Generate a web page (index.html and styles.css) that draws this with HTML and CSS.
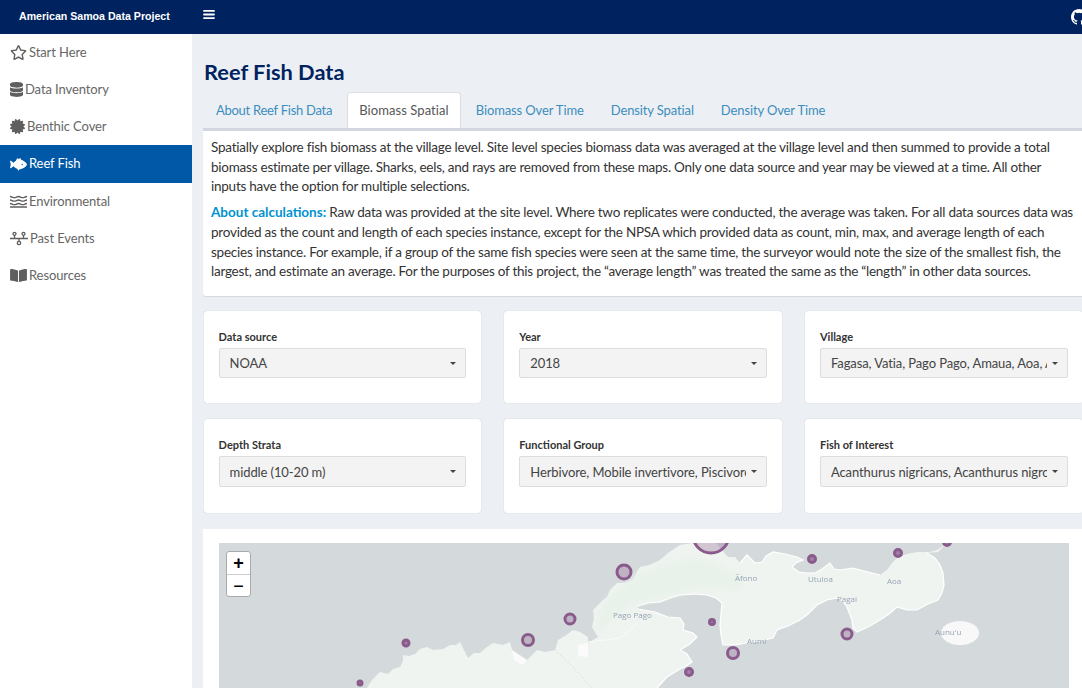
FILE: index.html
```html
<!DOCTYPE html>
<html lang="en">
<head>
    <meta charset="UTF-8">
    <meta name="viewport" content="width=device-width, initial-scale=1.0">
    <title>American Samoa Data Project</title>
    <link rel="stylesheet" href="styles.css">
</head>
<body>
    <div class="page">
        <header class="topbar">
            <div class="brand">American Samoa Data Project</div>
            <button class="toggle" aria-label="Toggle sidebar">
                <svg viewBox="0 0 12 9" width="12" height="9"><path d="M1 0h10a.8.8 0 0 1 0 1.8H1A.8.8 0 0 1 1 0zm0 3.6h10a.8.8 0 0 1 0 1.8H1a.8.8 0 0 1 0-1.8zm0 3.6h10a.8.8 0 0 1 0 1.8H1a.8.8 0 0 1 0-1.8z" fill="#fff"/></svg>
            </button>
            <svg class="github" viewBox="0 0 16 16" width="16" height="16"><path fill="#fff" d="M8 0C3.58 0 0 3.58 0 8c0 3.54 2.29 6.53 5.47 7.59.4.07.55-.17.55-.38 0-.19-.01-.82-.01-1.49-2.01.37-2.53-.49-2.69-.94-.09-.23-.48-.94-.82-1.13-.28-.15-.68-.52-.01-.53.63-.01 1.08.58 1.23.82.72 1.21 1.87.87 2.33.66.07-.52.28-.87.51-1.07-1.78-.2-3.64-.89-3.64-3.95 0-.87.31-1.59.82-2.15-.08-.2-.36-1.02.08-2.12 0 0 .67-.21 2.2.82a7.4 7.4 0 0 1 4 0c1.53-1.04 2.2-.82 2.2-.82.44 1.1.16 1.92.08 2.12.51.56.82 1.27.82 2.15 0 3.07-1.87 3.75-3.65 3.95.29.25.54.73.54 1.48 0 1.07-.01 1.93-.01 2.2 0 .21.15.46.55.38A8 8 0 0 0 16 8c0-4.42-3.58-8-8-8z"/></svg>
        </header>

        <div class="wrapper">
            <aside class="sidebar">
                <a class="nav-item" href="#">
                    <svg class="nav-icon" viewBox="0 0 576 512" width="17" height="15"><path d="M528.1 171.5L382 150.2 316.7 17.8c-11.7-23.6-45.6-23.9-57.4 0L194 150.2 47.9 171.5c-26.2 3.8-36.7 36.1-17.7 54.6l105.7 103-25 145.5c-4.5 26.3 23.2 46 46.4 33.7L288 439.6l130.7 68.7c23.2 12.2 50.9-7.4 46.4-33.7l-25-145.5 105.7-103c19-18.5 8.5-50.8-17.7-54.6zM388.6 312.3l23.7 138.4L288 385.4l-124.3 65.3 23.7-138.4-100.6-98 139-20.2 62.2-126 62.2 126 139 20.2-100.6 98z"/></svg>
                    <span class="nav-text">Start Here</span>
                </a>
                <a class="nav-item" href="#">
                    <svg class="nav-icon" viewBox="0 0 448 512" width="13" height="15"><path d="M448 73.143v45.714C448 159.143 347.667 192 224 192S0 159.143 0 118.857V73.143C0 32.857 100.333 0 224 0s224 32.857 224 73.143zM448 176v102.857C448 319.143 347.667 352 224 352S0 319.143 0 278.857V176c48.125 33.143 136.208 48.572 224 48.572S399.874 209.143 448 176zm0 160v102.857C448 479.143 347.667 512 224 512S0 479.143 0 438.857V336c48.125 33.143 136.208 48.572 224 48.572S399.874 369.143 448 336z"/></svg>
                    <span class="nav-text">Data Inventory</span>
                </a>
                <a class="nav-item" href="#">
                    <svg class="nav-icon" viewBox="0 0 512 512" width="15" height="15"><path d="M458.622 255.92l45.985-45.005c13.708-12.977 7.316-36.039-10.664-40.339l-62.65-15.99 17.661-62.015c4.991-17.838-11.829-34.663-29.661-29.671l-61.994 17.667-15.984-62.671C337.085.197 313.765-6.276 300.99 7.228L256 53.57 211.011 7.229c-12.63-13.351-36.047-7.234-40.325 10.668l-15.984 62.671-61.995-17.667C74.87 57.907 58.056 74.738 63.046 92.572l17.661 62.015-62.65 15.99C.069 174.878-6.31 197.944 7.392 210.915l45.985 45.005-45.985 45.004c-13.708 12.977-7.316 36.039 10.664 40.339l62.65 15.99-17.661 62.015c-4.991 17.838 11.829 34.663 29.661 29.671l61.994-17.667 15.984 62.671c4.439 18.575 27.696 24.018 40.325 10.668L256 458.61l44.989 46.001c12.5 13.488 35.987 7.486 40.325-10.668l15.984-62.671 61.994 17.667c17.836 4.994 34.651-11.837 29.661-29.671l-17.661-62.015 62.65-15.99c17.987-4.302 24.366-27.367 10.664-40.339l-45.984-45.004z"/></svg>
                    <span class="nav-text">Benthic Cover</span>
                </a>
                <a class="nav-item active" href="#">
                    <svg class="nav-icon" viewBox="0 0 576 512" width="17" height="15"><path d="M327.1 96c-89.97 0-168.54 54.77-212.27 101.63L27.5 131.58c-12.13-9.18-30.24.6-27.14 14.66L24.54 256 .35 365.77c-3.1 14.06 15.01 23.83 27.14 14.66l87.33-66.05C158.55 361.23 237.13 416 327.1 416 464.56 416 576 288 576 256S464.56 96 327.1 96zm87.43 184c-13.25 0-24-10.75-24-24 0-13.26 10.75-24 24-24 13.26 0 24 10.74 24 24 0 13.25-10.75 24-24 24z"/><path d="M190 150L240 40 300 70 350 30 390 110zM240 390L280 470 340 400z"/></svg>
                    <span class="nav-text">Reef Fish</span>
                </a>
                <a class="nav-item" href="#">
                    <svg class="nav-icon icon-lines" viewBox="0 0 17 15" width="17" height="15"><path d="M0 2.500c2.100 0 2.100 1.200 4.250 1.200S6.400 2.500 8.500 2.500s2.100 1.200 4.250 1.200S14.900 2.500 17 2.500M0 6c2.100 0 2.100 1.200 4.250 1.200S6.400 6 8.500 6s2.100 1.200 4.250 1.200S14.900 6 17 6M0 9.500c2.100 0 2.100 1.200 4.250 1.200S6.400 9.500 8.500 9.500s2.100 1.200 4.250 1.200S14.900 9.500 17 9.500M0 13h17"/></svg>
                    <span class="nav-text">Environmental</span>
                </a>
                <a class="nav-item" href="#">
                    <svg class="nav-icon icon-nodes" viewBox="0 0 18 15" width="18" height="15"><path d="M0 7.500h18M4.500 4v3.500M13.500 4v3.500M9 7.500V10"/><circle cx="4.500" cy="2.800" r="1.500"/><circle cx="13.500" cy="2.800" r="1.500"/><circle cx="9" cy="12" r="1.700"/></svg>
                    <span class="nav-text">Past Events</span>
                </a>
                <a class="nav-item" href="#">
                    <svg class="nav-icon" viewBox="0 0 576 512" width="17" height="15"><path d="M542.22 32.05c-54.8 3.11-163.72 14.43-230.96 55.59-4.64 2.84-7.27 7.89-7.27 13.17v363.87c0 11.55 12.63 18.85 23.28 13.49 69.18-34.82 169.23-44.32 218.7-46.92 16.89-.89 30.02-14.43 30.02-30.66V62.75c.01-17.71-15.35-31.74-33.77-30.7zM264.73 87.64C197.5 46.48 88.58 35.17 33.78 32.05 15.36 31.01 0 45.04 0 62.75V400.6c0 16.24 13.13 29.78 30.02 30.66 49.49 2.6 149.59 12.11 218.77 46.95 10.62 5.35 23.21-1.94 23.21-13.46V100.63c0-5.29-2.62-10.1-7.27-12.99z"/></svg>
                    <span class="nav-text">Resources</span>
                </a>
            </aside>

            <main class="content">
                <h1 class="page-title">Reef Fish Data</h1>

                <ul class="tabs">
                    <li class="tab">About Reef Fish Data</li>
                    <li class="tab active">Biomass Spatial</li>
                    <li class="tab">Biomass Over Time</li>
                    <li class="tab">Density Spatial</li>
                    <li class="tab">Density Over Time</li>
                </ul>

                <section class="tab-panel">
                    <p>Spatially explore fish biomass at the village level. Site level species biomass data was averaged at the village level and then summed to provide a total<br>biomass estimate per village. Sharks, eels, and rays are removed from these maps. Only one data source and year may be viewed at a time. All other<br>inputs have the option for multiple selections.</p>
                    <p><strong class="callout">About calculations:</strong> Raw data was provided at the site level. Where two replicates were conducted, the average was taken. For all data sources data was<br>provided as the count and length of each species instance, except for the NPSA which provided data as count, min, max, and average length of each<br>species instance. For example, if a group of the same fish species were seen at the same time, the surveyor would note the size of the smallest fish, the<br>largest, and estimate an average. For the purposes of this project, the “average length” was treated the same as the “length” in other data sources.</p>
                </section>

                <div class="filters">
                    <div class="card">
                        <label class="field-label">Data source</label>
                        <div class="picker"><span class="picker-text">NOAA</span><i class="caret"></i></div>
                    </div>
                    <div class="card">
                        <label class="field-label">Year</label>
                        <div class="picker"><span class="picker-text">2018</span><i class="caret"></i></div>
                    </div>
                    <div class="card">
                        <label class="field-label">Village</label>
                        <div class="picker"><span class="picker-text">Fagasa, Vatia, Pago Pago, Amaua, Aoa, Afono</span><i class="caret"></i></div>
                    </div>
                    <div class="card card-low">
                        <label class="field-label">Depth Strata</label>
                        <div class="picker"><span class="picker-text">middle (10-20 m)</span><i class="caret"></i></div>
                    </div>
                    <div class="card card-low">
                        <label class="field-label">Functional Group</label>
                        <div class="picker"><span class="picker-text">Herbivore, Mobile invertivore, Piscivore, Sessile</span><i class="caret"></i></div>
                    </div>
                    <div class="card card-low">
                        <label class="field-label">Fish of Interest</label>
                        <div class="picker"><span class="picker-text">Acanthurus nigricans, Acanthurus nigrofuscus</span><i class="caret"></i></div>
                    </div>
                </div>

                <section class="map-card">
                    <div class="map">
                        <svg class="map-art" viewBox="219 543 850 145" width="850" height="145">
                            <g class="base">
                                <path class="land" d="M367 688L372 680 380 672 388 674 393 669 400 667 403 661 403 655 409 656 415 654 420 649 427 647 433 650 443 649 450 645 456 645 460 642 464 650 468 658 474 653 480 653 487 647 493 643 503 645 510 642 512 650 518 654 527 660 537 650 545 652 555 650 558 640 565 636 573 630 580 632 588 637 588 643 598 637 592 627 594 618 593 610 603 600 607 597 610 590 617 583 625 583 633 580 637 572 640 567 650 565 660 560 668 553 680 545 693 543 716 543 728 557 735 557 740 563 747 555 755 563 762 562 766 556 773 552 785 554 797 557 803 560 796 563 792 567 799 572 807 573 815 573 822 569 830 563 834 569 840 570 853 568 868 572 880 575 887 570 892 563 897 558 907 554 917 552 930 552 937 550 945 545 938 552 927 553 935 558 940 565 943 573 944 585 942 593 938 600 928 604 917 610 907 610 897 607 889 614 880 620 868 627 857 632 853 628 852 620 847 607 843 601 837 598 827 600 817 605 808 614 800 620 788 626 777 630 773 638 760 641 747 643 735 645 723 645 721 635 720 625 722 603 716 598 707 595 695 594 680 595 670 598 660 602 648 603 638 606 638 609 655 612 668 617 680 618 684 624 683 630 693 633 697 637 690 644 680 650 687 654 692 662 686 666 680 669 667 677 657 688z"/>
                                <path class="green" d="M596 632L598 612 615 592 640 572 672 562 700 558 742 575 740 590 700 588 660 598 630 604 608 625z"/>
                                <path class="pale" d="M512 650L518 654 527 660 522 665 514 660zM578 645L588 643 588 657 578 656z"/>
                                <path class="coast" d="M638 606L648 603 660 602 670 598 680 595 695 594 707 595 716 598 722 603 720 625 721 635 723 645 735 645 747 643 760 641 773 638 777 630 788 626 800 620 808 614 817 605 827 600 837 598 843 601 847 607 852 620 853 628 857 632 868 627 880 620 889 614 897 607 907 610 917 610 928 604 938 600 942 593 944 585 943 573 940 565 935 558 927 553M740 563L747 555 755 563 762 562 766 556 773 552 785 554 797 557 803 560 796 563 792 567 799 572 807 573 815 573 822 569 830 563 834 569 840 570 853 568 868 572 880 575M638 609L655 612 668 617 680 618 684 624 683 630 693 633 697 637 690 644 680 650 687 654 692 662 686 666 680 669 667 677 657 688"/>
                                <path class="road" d="M588 642L606 640 620 638 630 630 637 623"/>
                                <path class="boundary" d="M555 650L574 668 592 688"/>
                                <ellipse class="island" cx="960" cy="633" rx="19" ry="12"/>
                                <text class="place" x="613" y="618">Pago Pago</text>
                                <text class="place" x="735" y="581">Āfono</text>
                                <text class="place" x="808" y="582">Utuloa</text>
                                <text class="place" x="887" y="584">Aoa</text>
                                <text class="place" x="837" y="602">Pagai</text>
                                <text class="place" x="747" y="644">Aumi</text>
                                <text class="place" x="935" y="635">Aunu'u</text>
                            </g>
                            <circle class="site" cx="711" cy="535" r="18"/>
                            <circle class="site" cx="624" cy="572" r="7"/>
                            <circle class="site" cx="570" cy="619" r="5"/>
                            <circle class="site" cx="528" cy="640" r="5.5"/>
                            <circle class="site dot" cx="406" cy="643" r="3"/>
                            <circle class="site dot" cx="360" cy="683" r="2"/>
                            <circle class="site dot" cx="812" cy="559" r="3.5"/>
                            <circle class="site dot" cx="898" cy="553" r="3.5"/>
                            <circle class="site dot" cx="947" cy="542" r="3.5"/>
                            <circle class="site dot" cx="712" cy="622" r="2.5"/>
                            <circle class="site" cx="733" cy="653" r="5.5"/>
                            <circle class="site" cx="847" cy="634" r="5"/>
                            <circle class="site dot" cx="689" cy="672" r="3.5"/>
                        </svg>
                        <div class="zoom-control">
                            <button class="zoom-btn">+</button>
                            <button class="zoom-btn">−</button>
                        </div>
                    </div>
                </section>
            </main>
        </div>
    </div>
</body>
</html>
```

FILE: styles.css
```css
html, body {
    margin: 0;
    height: 100%;
    overflow: hidden;
}
body {
    font-family: "Lato", "Noto Sans", sans-serif;
    font-size: 14px;
    color: #333;
    background-color: #ecf0f5;
}
.page {
    width: 1099px;
}
.topbar {
    display: flex;
    align-items: center;
    height: 34px;
    background: #00235f;
}
.brand {
    width: 192px;
    padding: 0 0 2px 19px;
    box-sizing: border-box;
    font-family: "Liberation Sans", Arial, sans-serif;
    font-size: 10.6px;
    font-weight: bold;
    color: #fff;
}
.toggle {
    display: flex;
    padding: 0;
    margin: -6px 0 0 11px;
    border: none;
    background: none;
}
.github {
    margin-left: auto;
    margin-right: 12px;
}
.wrapper {
    display: flex;
}
.sidebar {
    flex: none;
    width: 192px;
    height: 654px;
    background: #fff;
}
.nav-item {
    display: flex;
    align-items: center;
    gap: 2px;
    height: 37px;
    padding-left: 10px;
    color: #666;
    font-size: 13px;
    letter-spacing: -0.1px;
    text-decoration: none;
}
.nav-item.active {
    height: 38px;
    background: #0058a6;
    color: #fff;
}
.nav-text {
    padding-bottom: 2px;
}
.nav-icon {
    flex: none;
    fill: #5f5f5f;
}
.active .nav-icon {
    fill: #fff;
}
.nav-icon.icon-lines {
    fill: none;
    stroke: #5f5f5f;
    stroke-width: 1.3;
}
.nav-icon.icon-nodes {
    fill: none;
    stroke: #5f5f5f;
    stroke-width: 1.3;
}
.content {
    flex: none;
    width: 896px;
    padding-left: 11px;
    box-sizing: border-box;
}
.page-title {
    margin: 24px 0 0 1px;
    height: 34px;
    font-size: 21.8px;
    line-height: 27px;
    font-weight: bold;
    color: #00235f;
}
.tabs {
    display: flex;
    gap: 3px;
    height: 36px;
    margin: 0;
    padding: 0 0 0 1px;
    list-style: none;
}
.tab {
    padding: 9px 12px 0;
    color: #3c8dbc;
    font-size: 13px;
    letter-spacing: -0.12px;
    line-height: 18px;
}
.tab:first-child {
    letter-spacing: -0.27px;
}
.tab.active {
    background: #fff;
    color: #555;
    border: 1px solid #ddd;
    border-bottom: none;
    border-radius: 3px 3px 0 0;
    padding: 8px 11px 0;
    letter-spacing: 0.08px;
}
.tab-panel {
    height: 158px;
    padding: 7px 0 0 8px;
    background: #fff;
    border-top: 3px solid #d2d6de;
    border-radius: 0 0 3px 3px;
    box-shadow: 0 1px 1px rgba(0, 0, 0, 0.1);
    font-size: 13.5px;
    letter-spacing: -0.24px;
    line-height: 19.7px;
    white-space: nowrap;
    overflow: hidden;
}
.tab-panel p {
    margin: 0 0 6px;
}
.callout {
    color: #0093d0;
    letter-spacing: 0;
}
.filters {
    display: grid;
    grid-template-columns: repeat(3, 277.7px);
    grid-template-rows: 92px 94px;
    gap: 16px 23px;
    margin: 15px 0 0 0.6px;
}
.card {
    padding: 19px 15px 0;
    background: #fff;
    border-radius: 3px;
    box-shadow: 0 0 1px rgba(0, 0, 0, 0.25);
}
.field-label {
    display: block;
    height: 18px;
    font-size: 11px;
    line-height: 14px;
    font-weight: bold;
}
.picker {
    display: flex;
    align-items: center;
    gap: 5px;
    height: 28px;
    padding: 0 9px 0 10px;
    background: #f3f3f3;
    border: 1px solid #ddd;
    border-radius: 2px;
    font-size: 13px;
    letter-spacing: -0.1px;
    color: #444;
}
.card-low .picker {
    height: 29px;
}
.picker-text {
    flex: 1;
    overflow: hidden;
    white-space: nowrap;
}
.caret {
    flex: none;
    border-top: 3px solid #444;
    border-left: 3px solid transparent;
    border-right: 3px solid transparent;
}
.map-card {
    height: 300px;
    margin-top: 16px;
    padding: 14px 0 0 16px;
    background: #fff;
}
.map {
    position: relative;
    width: 850px;
    height: 145px;
    background: #d4dadc;
    overflow: hidden;
}
.map-art {
    display: block;
}
.base {
    filter: blur(0.5px);
}
.land {
    fill: #f0f4f0;
}
.green {
    fill: #e8f1ea;
    filter: blur(3px);
}
.pale {
    fill: #fafbfa;
}
.coast {
    fill: none;
    stroke: #fff;
    stroke-width: 1.2;
}
.road {
    fill: none;
    stroke: #fafbfa;
    stroke-width: 1;
}
.boundary {
    fill: none;
    stroke: #e8c8c4;
    stroke-width: 0.7;
    stroke-dasharray: 1.5 2;
}
.island {
    fill: #f7f8f7;
}
.place {
    font-family: "Open Sans", sans-serif;
    font-size: 8px;
    fill: #97a4b4;
}
.site {
    fill: #8b5a8c;
    fill-opacity: 0.3;
    stroke: #8b5a8c;
    stroke-width: 3;
}
.site.dot {
    fill-opacity: 0.7;
}
.zoom-control {
    position: absolute;
    top: 8px;
    left: 7px;
    display: flex;
    flex-direction: column;
    width: 23px;
    background: #fff;
    border: 1px solid #aaa;
    border-radius: 3px;
}
.zoom-btn {
    height: 22px;
    padding: 0;
    border: none;
    background: none;
    font-family: "Liberation Sans", Arial, sans-serif;
    font-size: 18px;
    font-weight: bold;
    line-height: 20px;
    color: #000;
}
.zoom-btn + .zoom-btn {
    border-top: 1px solid #ccc;
    font-weight: normal;
}
```
